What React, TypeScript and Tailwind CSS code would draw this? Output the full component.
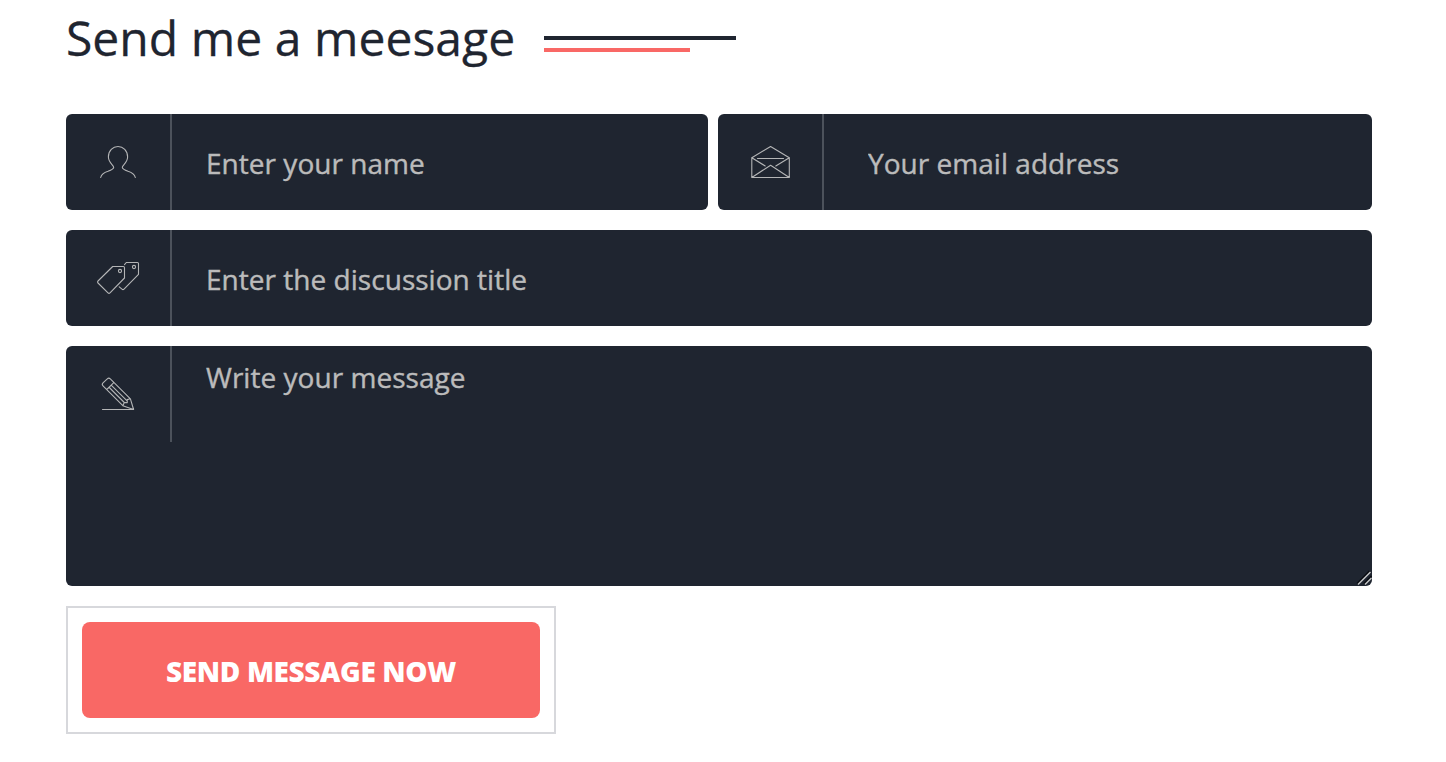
import type { ReactNode } from "react";

function IconCell({ children }: { children: ReactNode }) {
  return (
    <div className="h-[96px] w-[106px] shrink-0 border-r-2 border-[#4c525b]">
      <svg
        className="block h-[96px] w-[104px]"
        viewBox="0 0 104 96"
        fill="none"
        stroke="#b4b5b6"
        strokeWidth="1.1"
        strokeLinejoin="round"
        strokeLinecap="round"
        aria-hidden="true"
      >
        {children}
      </svg>
    </div>
  );
}

const inputClass =
  "h-[96px] min-w-0 flex-1 bg-transparent pt-[2px] text-[28px] tracking-[0.03px] text-[#bbbbbb] outline-none [-webkit-text-stroke:0.4px_#bbbbbb] placeholder:text-[#bbbbbb] placeholder:opacity-100";

export default function App() {
  return (
    <main className="h-[762px] w-[1446px] overflow-hidden bg-white px-[66px] font-['Open_Sans',sans-serif]">
      <header className="flex h-[114px] items-start">
        <h2 className="w-[478px] pt-[5px] text-[48px] leading-[65px] tracking-[0.04px] whitespace-nowrap text-[#1f2530] [-webkit-text-stroke:0.3px_#1f2530]">
          Send me a meesage
        </h2>
        <div className="flex flex-col gap-2 pt-[36px]">
          <div className="h-1 w-[192px] bg-[#1f2530]" />
          <div className="h-1 w-[146px] bg-[#f96865]" />
        </div>
      </header>

      <form className="flex w-[1306px] flex-col gap-5">
        <div className="flex gap-[10px]">
          <label className="flex w-[642px] overflow-hidden rounded-[6px] bg-[#1f2530]">
            <IconCell>
              <path d="M34.7 63.5C35.4 60 38 58.4 42 57.2C45 56.2 47.7 55.2 47.7 53.3C47.7 51.2 42.4 48.6 42.4 43C42.4 36.6 46.8 32.5 52 32.5S61.6 36.6 61.6 43C61.6 48.6 56.3 51.2 56.3 53.3C56.3 55.2 59 56.2 62 57.2C66 58.4 68.6 60 69.3 63.5" />
            </IconCell>
            <input className={`${inputClass} pl-[34px]`} placeholder="Enter your name" />
          </label>
          <label className="flex w-[654px] overflow-hidden rounded-[6px] bg-[#1f2530]">
            <IconCell>
              <path d="M33.8 43.7L52.6 32.5L71.3 43.7V63.5H33.8ZM39.5 44.5H65.5M33.8 43.7L47.2 52M71.3 43.7L57.8 52M33.8 63.5L52.6 51.2L71.3 63.5" />
            </IconCell>
            <input className={`${inputClass} pl-[44px]`} placeholder="Your email address" />
          </label>
        </div>

        <label className="flex overflow-hidden rounded-[6px] bg-[#1f2530]">
          <IconCell>
            <path d="M46.7 36.5H57.3Q58.5 36.5 58.5 37.7V48L44 62.8Q43 63.8 42 62.8L32 53Q31 52 32 51Z" />
            <path d="M58.5 34.6L60.3 32.5H71.5Q72.5 32.5 72.5 33.5V44.4L58 59.1Q57 60.1 56 59.1L53.2 56.8" />
            <circle cx="54" cy="41" r="1.6" />
            <circle cx="68" cy="37" r="1.6" />
          </IconCell>
          <input className={`${inputClass} pl-[34px]`} placeholder="Enter the discussion title" />
        </label>

        <label className="relative flex h-[240px] overflow-hidden rounded-[6px] bg-[#1f2530]">
          <IconCell>
            <path d="M36.5 63.5H67.6L64.4 52.8L44.3 32.8Q42.8 31.5 41.3 32.8L37 36.9Q35.5 38.4 37 39.9L56.8 59.7L67.6 63.5M40.8 43.5L47.5 36.8M43.3 41.5L58.3 56.5M45.4 39.4L60.6 54.4M56.8 59.7L58.3 56.5L61.3 56.6L61.2 53.6L64.4 52.8" />
          </IconCell>
          <textarea
            className="h-[240px] min-w-0 flex-1 resize-none bg-transparent pt-[12px] pl-[34px] text-[28px] leading-[38px] tracking-[0.03px] text-[#bbbbbb] outline-none [-webkit-text-stroke:0.4px_#bbbbbb] placeholder:text-[#bbbbbb] placeholder:opacity-100"
            placeholder="Write your message"
          />
          <svg
            className="pointer-events-none absolute right-0 bottom-0 h-4 w-4"
            viewBox="0 0 16 16"
            fill="none"
            aria-hidden="true"
          >
            <path d="M1 13.5L13.5 1M8 13.5L15.5 6" stroke="#080b10" strokeWidth="1.5" />
            <path d="M2 14.5L14.5 2M9 14.5L15.5 8" stroke="#c3c4c5" strokeWidth="1.5" />
          </svg>
        </label>

        <div className="flex h-[128px] w-[490px] border-2 border-[#d7d8dc] p-[14px]">
          <button
            type="button"
            className="flex flex-1 items-center justify-center rounded-[8px] bg-[#f96865] pt-[2px] text-[28px] font-extrabold tracking-[-0.38px] whitespace-nowrap text-white"
          >
            SEND MESSAGE NOW
          </button>
        </div>
      </form>
    </main>
  );
}
